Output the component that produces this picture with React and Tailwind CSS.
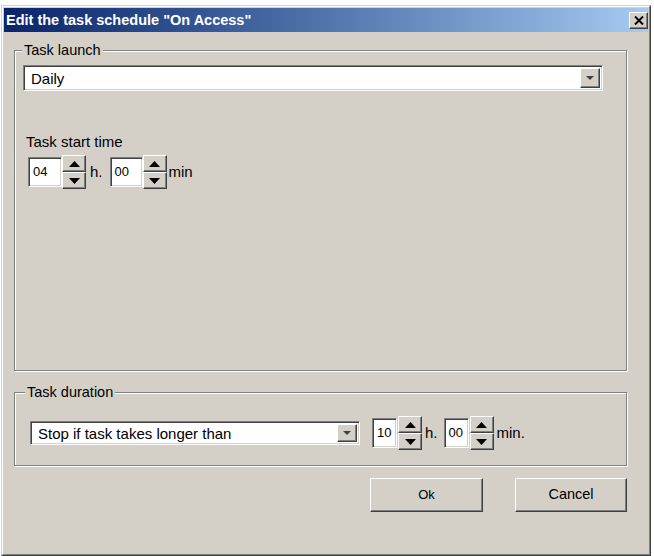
import React from 'react';

const raised =
  'border border-t-white border-l-white border-r-[#404040] border-b-[#404040] shadow-[inset_-1px_-1px_0_#808080,inset_1px_1px_0_#d4d0c8]';
const sunken =
  'border border-t-[#808080] border-l-[#808080] border-r-white border-b-white shadow-[inset_1px_1px_0_#404040,inset_-1px_-1px_0_#d4d0c8]';
const etched = 'border border-[#808080] shadow-[inset_1px_1px_0_#fff,1px_1px_0_#fff]';

const Tri = ({ up, w = 10, h = 6, color = '#000' }) => (
  <svg width={w} height={h} viewBox={`0 0 ${w} ${h}`}>
    <path d={up ? `M0 ${h}L${w / 2} 0L${w} ${h}Z` : `M0 0L${w} 0L${w / 2} ${h}Z`} fill={color} />
  </svg>
);

const Spinner = () => (
  <div className="flex flex-col w-[24px] h-[34px]">
    <div className={`h-[17px] flex items-center justify-center bg-[#d4d0c8] ${raised}`}>
      <Tri up w={11} h={6} />
    </div>
    <div className={`h-[17px] flex items-center justify-center bg-[#d4d0c8] ${raised}`}>
      <Tri w={11} h={6} />
    </div>
  </div>
);

const NumBox = ({ value, w }) => (
  <div className={`h-[30px] bg-white flex items-center pl-[4px] text-[13px] ${sunken}`} style={{ width: w }}>
    {value}
  </div>
);

const Select = ({ value, className }) => (
  <div className={`flex items-center bg-white ${sunken} ${className}`}>
    <span className="flex-1 pl-[7px] text-[15px] leading-none">{value}</span>
    <div className={`w-[20px] self-stretch m-[2px] flex items-center justify-center bg-[#d4d0c8] ${raised}`}>
      <Tri w={8} h={4} color="#404040" />
    </div>
  </div>
);

export default function App() {
  return (
    <div className="min-h-[556px] bg-white pt-[5px] pl-[1px] font-['Liberation_Sans',Arial,sans-serif] text-black overflow-hidden">
      <div className="w-[650px] h-[551px] flex flex-col border border-t-[#d4d0c8] border-l-[#d4d0c8] border-r-[#404040] border-b-[#404040] bg-[#d4d0c8]">
        <div className="flex flex-col flex-1 border border-t-white border-l-white border-r-[#808080] border-b-[#808080] p-[1px]">
          {/* title bar */}
          <div className="h-[24px] flex items-center justify-between pl-[2px] bg-gradient-to-r from-[#0a246a] to-[#a6caf0]">
            <span className="text-white font-bold text-[14.5px] leading-none">
              Edit the task schedule "On Access"
            </span>
            <button className={`w-[19px] h-[17px] flex items-center justify-center bg-[#d4d0c8] ${raised}`}>
              <svg width="10" height="9" viewBox="0 0 10 9">
                <path d="M1 0.5L9 8.5M9 0.5L1 8.5" stroke="#000" strokeWidth="2" />
              </svg>
            </button>
          </div>

          {/* body */}
          <div className="flex-1 pt-[10px] pl-[10px] pr-[21px]">
            <fieldset className={`h-[329px] ${etched}`}>
              <legend className="ml-[7px] px-[2px] text-[14.5px] leading-[17px] bg-[#d4d0c8]">Task launch</legend>
              <div className="pl-[8px] pr-[23px] pt-[6px]">
                <Select value="Daily" className="h-[26px]" />
                <div className="mt-[42px] pl-[3px] text-[15px] leading-[17px]">Task start time</div>
                <div className="mt-[5px] pl-[5px] flex items-center text-[15px]">
                  <NumBox value="04" w={34} />
                  <Spinner />
                  <span className="ml-[4px] mr-[7px]">h.</span>
                  <NumBox value="00" w={33} />
                  <Spinner />
                  <span className="ml-[2px]">min</span>
                </div>
              </div>
            </fieldset>

            <fieldset className={`mt-[13px] h-[82px] ${etched}`}>
              <legend className="ml-[10px] px-[2px] text-[14.5px] leading-[17px] bg-[#d4d0c8]">Task duration</legend>
              <div className="pl-[15px] pt-[15px] flex items-center text-[15px]">
                <Select value="Stop if task takes longer than" className="w-[330px] h-[24px]" />
                <div className="ml-[12px]">
                  <NumBox value="10" w={25} />
                </div>
                <div className="ml-[1px]">
                  <Spinner />
                </div>
                <span className="ml-[3px] mr-[6px]">h.</span>
                <NumBox value="00" w={25} />
                <div className="ml-[1px]">
                  <Spinner />
                </div>
                <span className="ml-[3px]">min.</span>
              </div>
            </fieldset>

            <div className="mt-[12px] flex justify-end gap-[32px]">
              <button className={`w-[113px] h-[34px] text-[13px] bg-[#d4d0c8] ${raised}`}>Ok</button>
              <button className={`w-[112px] h-[34px] text-[14.5px] bg-[#d4d0c8] ${raised}`}>Cancel</button>
            </div>
          </div>
        </div>
      </div>
    </div>
  );
}
